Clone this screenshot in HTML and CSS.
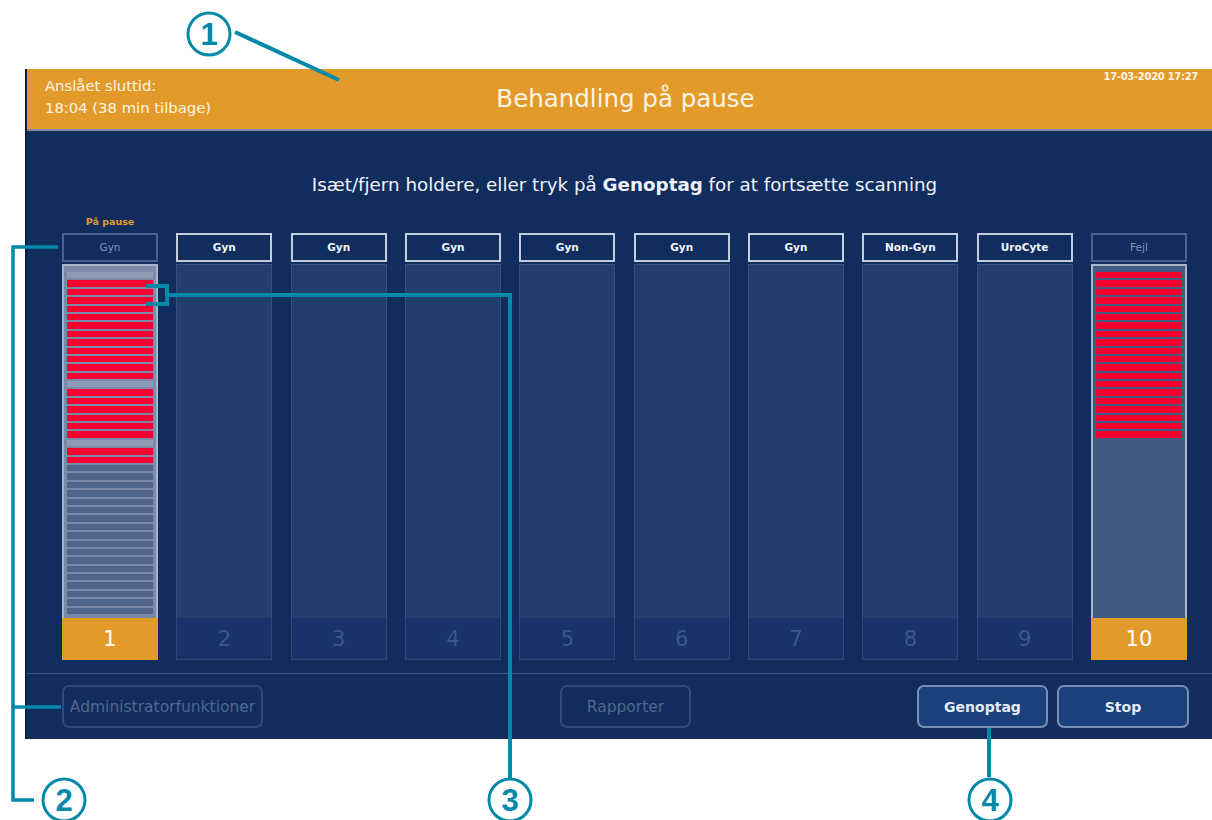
FILE: index.html
```html
<!DOCTYPE html>
<html lang="da">
	<head>
		<meta charset="UTF-8">
		<meta name="viewport" content="width=device-width, initial-scale=1.0">
		<title>Behandling på pause</title>
		<link rel="stylesheet" href="styles.css">
		<script type="text/javascript">
			window.onload = function() {
				// g = grå plads, r = fejl, e = tom, b = ingen
				var racks = {
					rack1: "grrrrrrrrrrrrgrrrrrrgrreeeeeeeeeeeeeeeeee",
					rack10: "rrrrrrrrrrrrrrrrrrrrbbbbbbbbbbbbbbbbbbbbb"
				};

				for (var id in racks) {
					var box = document.getElementById(id);
					var plan = racks[id];
					for (var i = 0; i < plan.length; ++i) {
						var slot = document.createElement("div");
						slot.className = "slot slot-" + plan[i];
						box.appendChild(slot);
					}
				}
			};
		</script>
	</head>
	<body>
		<div class="screen">
			<div class="topbar">
				<div class="eta">
					<div>Anslået sluttid:</div>
					<div>18:04 (38 min tilbage)</div>
				</div>
				<div class="title">Behandling på pause</div>
				<div class="clock">17-03-2020 17:27</div>
			</div>

			<div class="board">
				<p class="hint">Isæt/fjern holdere, eller tryk på <b>Genoptag</b> for at fortsætte scanning</p>

				<div class="racks">
					<div class="rack paused">
						<div class="tag">På pause</div>
						<div class="head">Gyn</div>
						<div class="body" id="rack1"></div>
						<div class="num">1</div>
					</div>
					<div class="rack">
						<div class="tag"></div>
						<div class="head">Gyn</div>
						<div class="body"></div>
						<div class="num">2</div>
					</div>
					<div class="rack">
						<div class="tag"></div>
						<div class="head">Gyn</div>
						<div class="body"></div>
						<div class="num">3</div>
					</div>
					<div class="rack">
						<div class="tag"></div>
						<div class="head">Gyn</div>
						<div class="body"></div>
						<div class="num">4</div>
					</div>
					<div class="rack">
						<div class="tag"></div>
						<div class="head">Gyn</div>
						<div class="body"></div>
						<div class="num">5</div>
					</div>
					<div class="rack">
						<div class="tag"></div>
						<div class="head">Gyn</div>
						<div class="body"></div>
						<div class="num">6</div>
					</div>
					<div class="rack">
						<div class="tag"></div>
						<div class="head">Gyn</div>
						<div class="body"></div>
						<div class="num">7</div>
					</div>
					<div class="rack">
						<div class="tag"></div>
						<div class="head">Non-Gyn</div>
						<div class="body"></div>
						<div class="num">8</div>
					</div>
					<div class="rack">
						<div class="tag"></div>
						<div class="head">UroCyte</div>
						<div class="body"></div>
						<div class="num">9</div>
					</div>
					<div class="rack error">
						<div class="tag"></div>
						<div class="head">Fejl</div>
						<div class="body" id="rack10"></div>
						<div class="num">10</div>
					</div>
				</div>
			</div>

			<div class="footer">
				<button class="btn off btn-admin">Administratorfunktioner</button>
				<button class="btn off btn-report">Rapporter</button>
				<div class="actions">
					<button class="btn btn-resume">Genoptag</button>
					<button class="btn btn-stop">Stop</button>
				</div>
			</div>
		</div>

		<svg class="callouts" width="1212" height="820" viewBox="0 0 1212 820">
			<g class="lines">
				<line x1="235" y1="32" x2="339" y2="80" stroke-width="4"/>
				<polyline points="58,247 13,247 13,800 34,800" stroke-width="3.5"/>
				<line x1="13" y1="707" x2="61" y2="707" stroke-width="3.5"/>
				<polyline points="146,286 167,286 167,304 146,304" stroke-width="4"/>
				<polyline points="167,295 510,295 510,778" stroke-width="4"/>
				<line x1="989" y1="728" x2="989" y2="777" stroke-width="4"/>
			</g>
			<g class="marks">
				<circle cx="209" cy="34" r="21"/>
				<text x="209" y="45">1</text>
				<circle cx="64" cy="800" r="21"/>
				<text x="64" y="811">2</text>
				<circle cx="510" cy="800" r="21"/>
				<text x="510" y="811">3</text>
				<circle cx="990" cy="800" r="21"/>
				<text x="990" y="811">4</text>
			</g>
		</svg>
	</body>
</html>
```

FILE: styles.css
```css
* {
	margin: 0;
	padding: 0;
	box-sizing: border-box;
}

body {
	width: 1212px;
	height: 820px;
	background-color: #fff;
	font-family: "DejaVu Sans", "Open Sans", sans-serif;
	position: relative;
	overflow: hidden;
}

.screen {
	height: 670px;
	margin: 69px 0 0 25px;
	background-color: #102d5e;
	border-left: 2px solid #0a1e44;
	display: flex;
	flex-direction: column;
}

/* top bar */
.topbar {
	height: 62px;
	background-color: #e29b2b;
	border-bottom: 2px solid #7e8ca2;
	color: #fdf3e3;
	display: grid;
	grid-template-columns: 1fr auto 1fr;
}

.eta {
	padding: 6px 0 0 18px;
	font-size: 14.8px;
	line-height: 22px;
}

.title {
	align-self: center;
	padding: 0 0 2px 12px;
	font-size: 24.5px;
}

.clock {
	justify-self: end;
	padding: 2px 14px 0 0;
	font-size: 10px;
	font-weight: 700;
	letter-spacing: -0.3px;
}

/* racks */
.board {
	flex: 1;
	padding: 0 25px 0 35px;
}

.hint {
	margin-top: 43px;
	line-height: 22px;
	font-size: 18.3px;
	color: #eef2f8;
	text-align: center;
}

.racks {
	margin-top: 20px;
	display: grid;
	grid-template-columns: repeat(10, 1fr);
	column-gap: 18.3px;
}

.rack {
	display: flex;
	flex-direction: column;
}

.tag {
	height: 12px;
	margin-bottom: 5px;
	font-size: 9.5px;
	font-weight: 700;
	line-height: 12px;
	color: #e29b2b;
	text-align: center;
}

.head {
	height: 29px;
	border: 2px solid #c3ccdd;
	font-size: 10.5px;
	font-weight: 700;
	line-height: 25px;
	color: #f2f5fa;
	text-align: center;
}

.body {
	height: 354px;
	margin-top: 2px;
	border: 1px solid #34507e;
	border-bottom: none;
	background-color: #223e6d;
	padding: 6px 3px 4px;
	display: flex;
	flex-direction: column;
	gap: 2px;
}

.num {
	height: 42px;
	border: 1px solid #2c4877;
	border-top: none;
	background-color: #17336a;
	font-size: 21px;
	line-height: 42px;
	color: #3b5788;
	text-align: center;
}

.paused .head,
.error .head {
	border-color: #4a6290;
	font-weight: 400;
	color: #8293b5;
}

.paused .body {
	border: 2px solid #a9b4c9;
	border-bottom: none;
	background-color: #7a8aa8;
}

.error .body {
	border: 2px solid #a9b4c9;
	border-bottom: none;
	background-color: #425a82;
}

.paused .num,
.error .num {
	border: none;
	background-color: #e29b2b;
	color: #fff;
}

.slot {
	flex: 1;
}

.slot-g {
	background-color: #8e9bb4;
}

.slot-r {
	background-color: #f5002f;
}

.slot-e {
	background-color: #4f6489;
}

/* bottom buttons */
.footer {
	border-top: 1px solid #3b5685;
	padding: 11px 23px 11px 35px;
	display: grid;
	grid-template-columns: 1fr auto 1fr;
	align-items: center;
}

.btn {
	height: 43px;
	border: 2px solid #7b8fb4;
	border-radius: 7px;
	background-color: #1c3f7e;
	font-family: inherit;
	font-size: 14px;
	font-weight: 700;
	color: #e5ebf5;
}

.btn.off {
	border-color: #2e4a7a;
	background-color: transparent;
	font-size: 15.5px;
	font-weight: 400;
	color: #51668f;
}

.btn-admin {
	justify-self: start;
	width: 201px;
}

.btn-report {
	width: 131px;
}

.actions {
	justify-self: end;
	display: flex;
	gap: 9px;
}

.btn-resume {
	width: 131px;
}

.btn-stop {
	width: 132px;
}

/* callouts over the screenshot */
.callouts {
	position: absolute;
	left: 0;
	top: 0;
	pointer-events: none;
}

.lines line,
.lines polyline {
	stroke: #0089a8;
	fill: none;
}

.marks circle {
	fill: #fff;
	stroke: #0089a8;
	stroke-width: 3;
}

.marks text {
	font-family: "Liberation Sans", Arial, sans-serif;
	font-size: 31px;
	font-weight: 700;
	fill: #0089a8;
	text-anchor: middle;
}
```
